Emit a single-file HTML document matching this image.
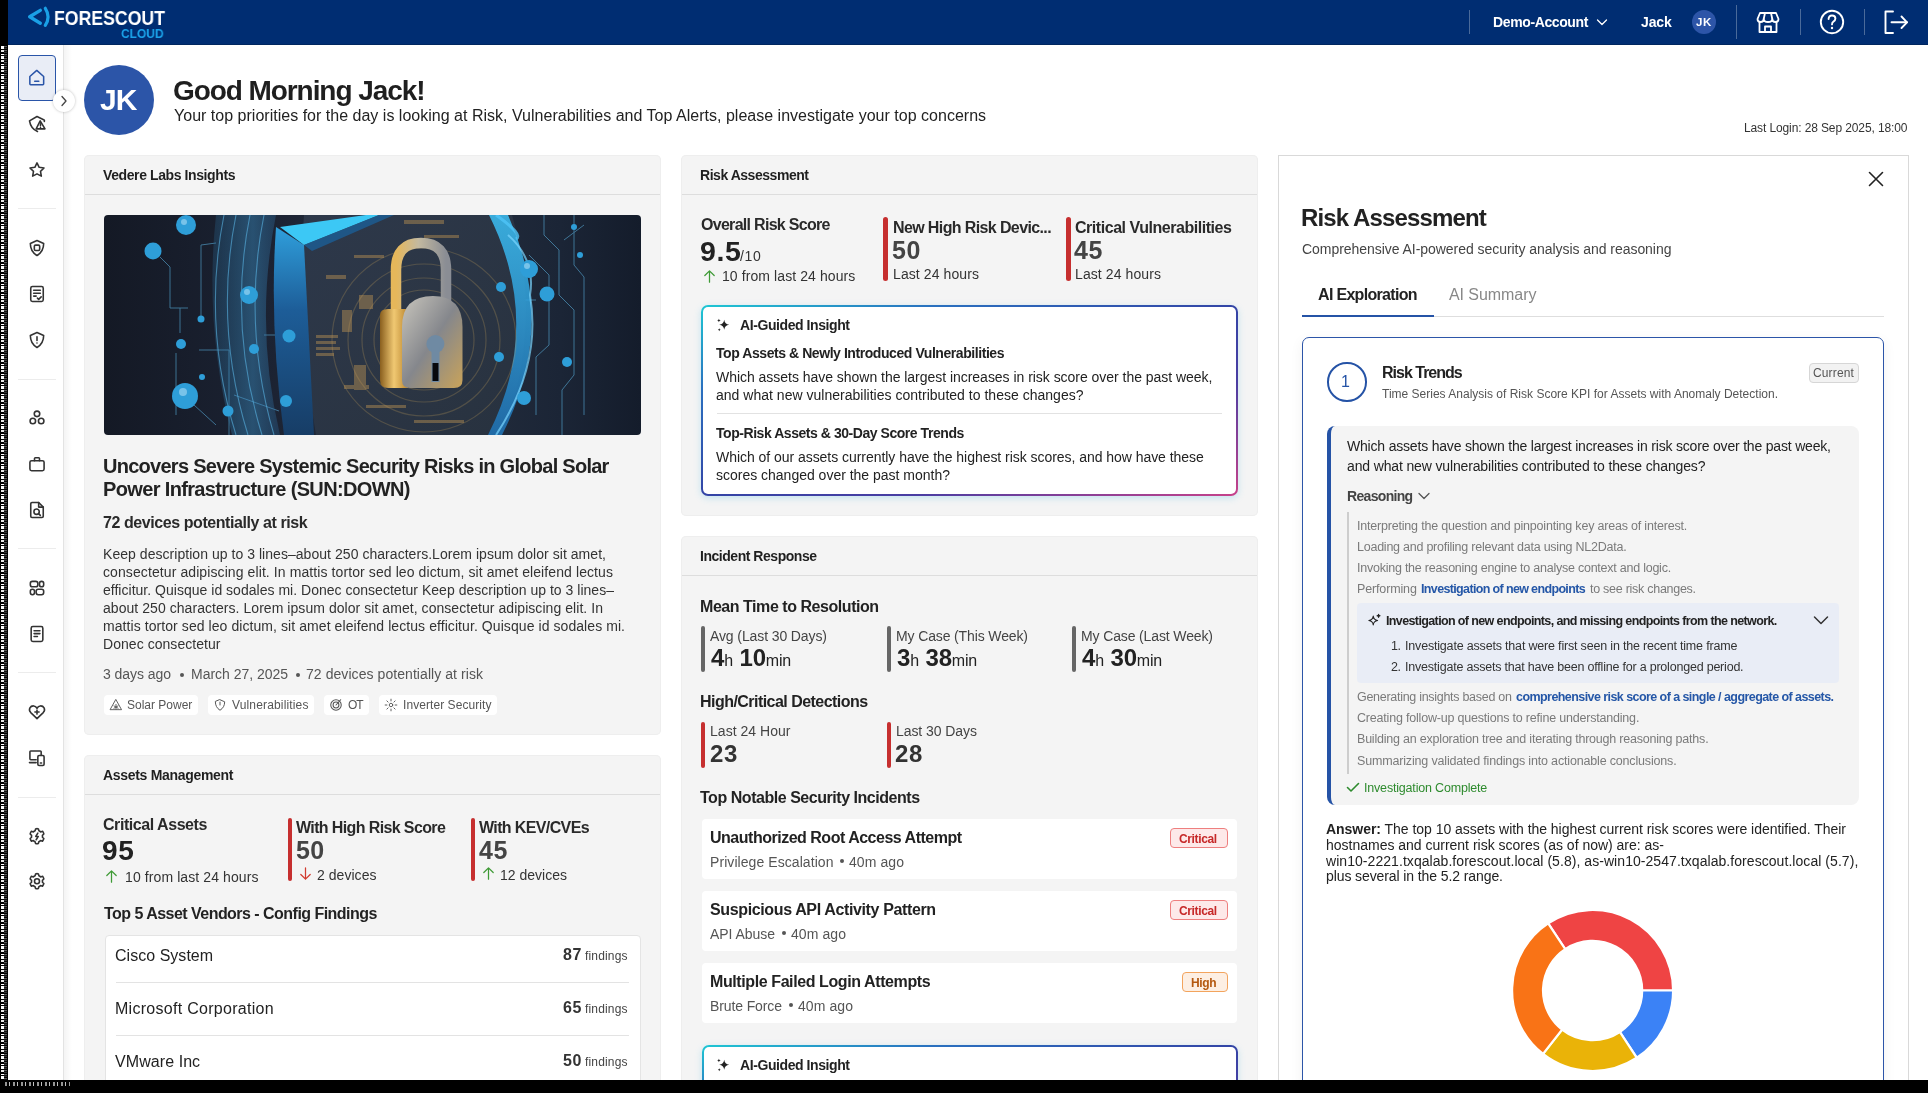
<!DOCTYPE html>
<html><head><meta charset="utf-8"><title>Forescout Cloud</title>
<style>
*{box-sizing:border-box;margin:0;padding:0}
html,body{width:1928px;height:1093px;overflow:hidden;background:#000}
body{position:relative;font-family:"Liberation Sans",sans-serif;color:#222;-webkit-font-smoothing:antialiased}
.a{position:absolute;white-space:nowrap;will-change:transform}
.b{position:absolute}
</style></head>
<body>
<div class="b" style="left:8px;top:0px;width:1920px;height:1080px;background:#fff"></div>
<div class="b" style="left:1px;top:46px;width:2.5px;height:1036px;background:repeating-linear-gradient(180deg,#fff 0,#fff 3px,#000 3px,#000 4px,#e8e8e8 4px,#e8e8e8 6px,#000 6px,#000 8px,#fff 8px,#fff 9px,#000 9px,#000 10px)"></div>
<div class="b" style="left:3.5px;top:46px;width:3.5px;height:1036px;background:repeating-linear-gradient(180deg,#555 0,#555 1px,#111 1px,#111 2px,#333 2px,#333 3px,#000 3px,#000 4px)"></div>
<div class="b" style="left:8px;top:0px;width:1920px;height:45px;background:#002d72;border-bottom:1px solid #00265f"></div>
<svg class="b" style="left:24px;top:4px;" width="30" height="26" viewBox="0 0 30 26"><path d="M16.3 6.4 L5.7 12.8 L16.3 19.2" fill="none" stroke="#1aa0e6" stroke-width="3.4" stroke-linecap="round" stroke-linejoin="round"/><path d="M21.3 4.3 Q26.8 12.8 21.3 21.3" fill="none" stroke="#1aa0e6" stroke-width="3.2" stroke-linecap="round"/></svg>
<div class="a" id="t1" style="left:53.53px;top:7.15px;font-size:21px;line-height:21px;color:#fff;font-weight:700;transform-origin:0 0;transform:scaleX(0.842)">FORESCOUT</div>
<div class="a" id="t2" style="left:120.57px;top:26.70px;font-size:13.3px;line-height:13.3px;color:#1ba3ea;font-weight:700;transform-origin:0 0;transform:scaleX(0.9)">CLOUD</div>
<div class="b" style="left:1469px;top:10px;width:1px;height:24px;background:#4a6a9a"></div>
<div class="a" id="t3" style="left:1493.42px;top:15.10px;font-size:14px;line-height:14px;color:#fff;font-weight:700;letter-spacing:-0.380px">Demo-Account</div>
<svg class="b" style="left:1596px;top:18px;" width="12" height="9" viewBox="0 0 12 9"><path d="M1.5 2 L6 6.5 L10.5 2" fill="none" stroke="#fff" stroke-width="1.3" stroke-linecap="round" stroke-linejoin="round"/></svg>
<div class="a" id="t4" style="left:1641.02px;top:15.10px;font-size:14px;line-height:14px;color:#fff;font-weight:700;letter-spacing:-0.159px">Jack</div>
<div class="b" style="left:1692px;top:10px;width:24px;height:24px;background:#2d55a8;border-radius:50%"></div>
<div class="a" id="t5" style="left:1695.89px;top:17.23px;font-size:11.5px;line-height:11.5px;color:#fff;font-weight:700;letter-spacing:0.502px">JK</div>
<div class="b" style="left:1736px;top:5px;width:1px;height:34px;background:#4a6a9a"></div>
<svg class="b" style="left:1756px;top:11px;" width="24" height="23" viewBox="0 0 24 23"><g fill="none" stroke="#fff" stroke-width="1.8" stroke-linecap="round" stroke-linejoin="round"><path d="M4 2 H20 L22.5 8 Q22.5 11 19.4 11 Q16.3 11 16.3 8 Q16.3 11 12 11 Q7.7 11 7.7 8 Q7.7 11 4.6 11 Q1.5 11 1.5 8 Z"/><path d="M7.7 8 L9 2 M16.3 8 L15 2"/><path d="M3.5 11 V21 H20.5 V11"/><path d="M9 21 V15.5 H15 V21"/></g></svg>
<div class="b" style="left:1800px;top:9px;width:1px;height:26px;background:#4a6a9a"></div>
<svg class="b" style="left:1819px;top:9px;" width="26" height="26" viewBox="0 0 26 26"><circle cx="13" cy="13" r="11.2" fill="none" stroke="#fff" stroke-width="1.9"/><path d="M9.6 10 Q9.6 6.5 13 6.5 Q16.4 6.5 16.4 9.6 Q16.4 11.6 14.4 12.6 Q13 13.3 13 15.4" fill="none" stroke="#fff" stroke-width="1.9" stroke-linecap="round"/><circle cx="13" cy="19" r="1.2" fill="#fff"/></svg>
<div class="b" style="left:1864px;top:9px;width:1px;height:26px;background:#4a6a9a"></div>
<svg class="b" style="left:1883px;top:10px;" width="26" height="25" viewBox="0 0 26 25"><g fill="none" stroke="#fff" stroke-width="1.9" stroke-linecap="round" stroke-linejoin="round"><path d="M10 1.5 H2.5 V23 H10"/><path d="M8.5 12.3 H24"/><path d="M18.5 6.5 L24 12.3 L18.5 18"/></g></svg>
<div class="b" style="left:8px;top:45px;width:56px;height:1035px;background:#fff;border-right:1px solid #e3e3e3"></div>
<div class="b" style="left:64px;top:45px;width:8px;height:1035px;background:linear-gradient(90deg,rgba(0,0,0,.045),rgba(0,0,0,0))"></div>
<div class="b" style="left:18px;top:55px;width:38px;height:46px;background:#e9edf6;border:1.2px solid #2a55a8;border-radius:4px"></div>
<svg class="b" style="left:27.2px;top:68.0px" width="19.5" height="19.5" viewBox="0 0 24 24" fill="none" stroke="#2a55a8" stroke-width="1.9" stroke-linecap="round" stroke-linejoin="round"><path d="M3.5 10.5 L12 3 L20.5 10.5 V19.5 Q20.5 20.5 19.5 20.5 H4.5 Q3.5 20.5 3.5 19.5 Z"/><path d="M9.5 16.3 H14.5"/></svg>
<div class="b" style="left:53px;top:90px;width:22px;height:22px;background:#fff;border-radius:50%;box-shadow:0 0 3px rgba(0,0,0,.25)"></div>
<svg class="b" style="left:60px;top:95px;" width="8" height="12" viewBox="0 0 8 12"><path d="M2 1.5 L6 6 L2 10.5" fill="none" stroke="#444" stroke-width="1.3" stroke-linecap="round" stroke-linejoin="round"/></svg>
<svg class="b" style="left:27.0px;top:114.0px" width="20" height="20" viewBox="0 0 24 24" fill="none" stroke="#333" stroke-width="1.9" stroke-linecap="round" stroke-linejoin="round"><path d="M12.6 21 Q4.5 17.5 3 8.2 L12 3 L20.6 7.2 Q21.3 8 20.8 9"/><path d="M15.8 8.2 L11 17.8 H21.6 Z"/><path d="M16.2 11.8 V14.2"/><path d="M16.2 16.1 V16.2"/></svg>
<svg class="b" style="left:27.0px;top:160.0px" width="20" height="20" viewBox="0 0 24 24" fill="none" stroke="#333" stroke-width="1.9" stroke-linecap="round" stroke-linejoin="round"><path d="M12 3.5 L14.6 8.8 L20.4 9.6 L16.2 13.6 L17.2 19.4 L12 16.7 L6.8 19.4 L7.8 13.6 L3.6 9.6 L9.4 8.8 Z"/></svg>
<div class="b" style="left:18px;top:208px;width:38px;height:1px;background:#ececec"></div>
<svg class="b" style="left:27.0px;top:238.0px" width="20" height="20" viewBox="0 0 24 24" fill="none" stroke="#333" stroke-width="1.9" stroke-linecap="round" stroke-linejoin="round"><path d="M12 3 L20 6.5 Q20 16 12 21 Q4 16 4 6.5 Z"/><rect x="8.8" y="8.5" width="6.4" height="6.4" rx="1.5"/></svg>
<svg class="b" style="left:27.0px;top:284.0px" width="20" height="20" viewBox="0 0 24 24" fill="none" stroke="#333" stroke-width="1.9" stroke-linecap="round" stroke-linejoin="round"><rect x="4.5" y="3" width="15" height="18" rx="2"/><path d="M8 7.5 H16 M8 11 H16 M8 14.5 H11"/><path d="M12.5 17 L14 18.5 L17 15.5"/></svg>
<svg class="b" style="left:27.0px;top:330.0px" width="20" height="20" viewBox="0 0 24 24" fill="none" stroke="#333" stroke-width="1.9" stroke-linecap="round" stroke-linejoin="round"><path d="M12 3 L20 6.5 Q20 16 12 21 Q4 16 4 6.5 Z"/><path d="M12 8 V12.5"/><path d="M12 15.5 V15.6"/></svg>
<div class="b" style="left:18px;top:379px;width:38px;height:1px;background:#ececec"></div>
<svg class="b" style="left:27.0px;top:408.0px" width="20" height="20" viewBox="0 0 24 24" fill="none" stroke="#333" stroke-width="1.9" stroke-linecap="round" stroke-linejoin="round"><circle cx="12" cy="7" r="3.3"/><circle cx="7" cy="15.5" r="3.3"/><circle cx="17" cy="15.5" r="3.3"/></svg>
<svg class="b" style="left:27.0px;top:454.0px" width="20" height="20" viewBox="0 0 24 24" fill="none" stroke="#333" stroke-width="1.9" stroke-linecap="round" stroke-linejoin="round"><rect x="3.5" y="8" width="17" height="12" rx="2"/><path d="M9 8 V5.5 Q9 4.5 10 4.5 H14 Q15 4.5 15 5.5 V8"/></svg>
<svg class="b" style="left:27.0px;top:500.0px" width="20" height="20" viewBox="0 0 24 24" fill="none" stroke="#333" stroke-width="1.9" stroke-linecap="round" stroke-linejoin="round"><path d="M14 3 H6 Q4.5 3 4.5 4.5 V19.5 Q4.5 21 6 21 H18 Q19.5 21 19.5 19.5 V8.5 Z"/><path d="M14 3 V8.5 H19.5"/><circle cx="11.5" cy="14" r="3.2"/><path d="M13.8 16.3 L16 18.5"/></svg>
<div class="b" style="left:18px;top:548px;width:38px;height:1px;background:#ececec"></div>
<svg class="b" style="left:27.0px;top:578.0px" width="20" height="20" viewBox="0 0 24 24" fill="none" stroke="#333" stroke-width="1.9" stroke-linecap="round" stroke-linejoin="round"><rect x="4" y="4" width="9" height="6.5" rx="2.5"/><rect x="15" y="4" width="5" height="6.5" rx="2.5"/><rect x="4" y="13.5" width="5" height="6.5" rx="2.5"/><rect x="11" y="13.5" width="9" height="6.5" rx="2.5"/></svg>
<svg class="b" style="left:27.0px;top:624.0px" width="20" height="20" viewBox="0 0 24 24" fill="none" stroke="#333" stroke-width="1.9" stroke-linecap="round" stroke-linejoin="round"><rect x="5" y="3" width="14" height="18" rx="2"/><path d="M8.5 8 H15.5 M8.5 11.5 H15.5 M8.5 15 H12.5"/></svg>
<div class="b" style="left:18px;top:672px;width:38px;height:1px;background:#ececec"></div>
<svg class="b" style="left:27.0px;top:702.0px" width="20" height="20" viewBox="0 0 24 24" fill="none" stroke="#333" stroke-width="1.9" stroke-linecap="round" stroke-linejoin="round"><path d="M12 20 L4.5 12.7 Q2 10 3.5 7 Q5 4.5 8 4.7 Q10.5 5 12 7.5 Q13.5 5 16 4.7 Q19 4.5 20.5 7 Q22 10 19.5 12.7 Z"/><path d="M12 9.5 V14.5 M9.5 12 H14.5"/></svg>
<svg class="b" style="left:27.0px;top:748.0px" width="20" height="20" viewBox="0 0 24 24" fill="none" stroke="#333" stroke-width="1.9" stroke-linecap="round" stroke-linejoin="round"><path d="M17 8 V4.5 Q17 3.5 16 3.5 H4.5 Q3.5 3.5 3.5 4.5 V13 Q3.5 14 4.5 14 H11"/><path d="M3 17.5 H11"/><rect x="13" y="9" width="7.5" height="12" rx="1.5"/><path d="M16 18 H17.5"/></svg>
<div class="b" style="left:18px;top:797px;width:38px;height:1px;background:#ececec"></div>
<svg class="b" style="left:27.0px;top:826.0px" width="20" height="20" viewBox="0 0 24 24" fill="none" stroke="#333" stroke-width="1.9" stroke-linecap="round" stroke-linejoin="round"><path d="M10.3 3.5 Q12 2.8 13.7 3.5 L14.3 5.8 Q15.5 6.3 16.4 7.1 L18.7 6.4 Q19.8 7.8 20.2 9.6 L18.5 11.2 Q18.7 12.5 18.5 13.5 L20.2 15 Q19.7 16.8 18.6 18.2 L16.3 17.5 Q15.4 18.3 14.2 18.8 L13.6 21 Q12 21.6 10.3 21 L9.7 18.8 Q8.5 18.3 7.6 17.5 L5.3 18.2 Q4.2 16.8 3.8 15 L5.5 13.5 Q5.3 12.3 5.5 11.2 L3.8 9.6 Q4.2 7.8 5.3 6.4 L7.6 7.1 Q8.5 6.3 9.7 5.8 Z"/><path d="M13 8.5 L10.5 12.5 H13.5 L11 16.5"/></svg>
<svg class="b" style="left:27.0px;top:871.0px" width="20" height="20" viewBox="0 0 24 24" fill="none" stroke="#333" stroke-width="1.9" stroke-linecap="round" stroke-linejoin="round"><path d="M10.3 3.5 Q12 2.8 13.7 3.5 L14.3 5.8 Q15.5 6.3 16.4 7.1 L18.7 6.4 Q19.8 7.8 20.2 9.6 L18.5 11.2 Q18.7 12.5 18.5 13.5 L20.2 15 Q19.7 16.8 18.6 18.2 L16.3 17.5 Q15.4 18.3 14.2 18.8 L13.6 21 Q12 21.6 10.3 21 L9.7 18.8 Q8.5 18.3 7.6 17.5 L5.3 18.2 Q4.2 16.8 3.8 15 L5.5 13.5 Q5.3 12.3 5.5 11.2 L3.8 9.6 Q4.2 7.8 5.3 6.4 L7.6 7.1 Q8.5 6.3 9.7 5.8 Z"/><circle cx="12" cy="12.2" r="3"/></svg>
<div class="b" style="left:84px;top:65px;width:70px;height:70px;background:#2c55a8;border-radius:50%"></div>
<div class="a" id="t6" style="left:99.90px;top:84.50px;font-size:30px;line-height:30px;color:#fff;font-weight:700;letter-spacing:-1.000px">JK</div>
<div class="a" id="t7" style="left:173.04px;top:77.20px;font-size:28px;line-height:28px;color:#1f1f1f;font-weight:700;letter-spacing:-1.072px">Good Morning Jack!</div>
<div class="a" id="t8" style="left:173.88px;top:108.10px;font-size:16px;line-height:16px;color:#222;letter-spacing:0.013px">Your top priorities for the day is looking at Risk, Vulnerabilities and Top Alerts, please investigate your top concerns</div>
<div class="a" id="t9" style="left:1744.16px;top:121.80px;font-size:12px;line-height:12px;color:#333;letter-spacing:-0.116px">Last Login: 28 Sep 2025, 18:00</div>
<div class="b" style="left:84px;top:155px;width:577px;height:580px;background:#f4f4f4;border-radius:5px;box-shadow:inset 0 0 0 1px #eeeeee"></div>
<div class="b" style="left:85px;top:194px;width:575px;height:1px;background:#dddddd"></div>
<div class="a" id="t10" style="left:103.02px;top:168.10px;font-size:14px;line-height:14px;color:#1f1f1f;font-weight:700;letter-spacing:-0.399px">Vedere Labs Insights</div>
<div class="b" style="left:681px;top:155px;width:577px;height:361px;background:#f4f4f4;border-radius:5px;box-shadow:inset 0 0 0 1px #eeeeee"></div>
<div class="b" style="left:682px;top:194px;width:575px;height:1px;background:#dddddd"></div>
<div class="a" id="t11" style="left:700.02px;top:168.10px;font-size:14px;line-height:14px;color:#1f1f1f;font-weight:700;letter-spacing:-0.461px">Risk Assessment</div>
<div class="b" style="left:681px;top:536px;width:577px;height:560px;background:#f4f4f4;border-radius:5px;box-shadow:inset 0 0 0 1px #eeeeee"></div>
<div class="b" style="left:682px;top:575px;width:575px;height:1px;background:#dddddd"></div>
<div class="a" id="t12" style="left:700.02px;top:549.10px;font-size:14px;line-height:14px;color:#1f1f1f;font-weight:700;letter-spacing:-0.468px">Incident Response</div>
<div class="b" style="left:84px;top:755px;width:577px;height:340px;background:#f4f4f4;border-radius:5px;box-shadow:inset 0 0 0 1px #eeeeee"></div>
<div class="b" style="left:85px;top:794px;width:575px;height:1px;background:#dddddd"></div>
<div class="a" id="t13" style="left:103.02px;top:768.10px;font-size:14px;line-height:14px;color:#1f1f1f;font-weight:700;letter-spacing:-0.307px">Assets Management</div>
<svg class="b" style="left:104px;top:215px;border-radius:4px" width="537" height="220" viewBox="0 0 537 220"><defs>
<linearGradient id="bgg" x1="0" y1="0" x2="1" y2="0"><stop offset="0" stop-color="#141925"/><stop offset="0.3" stop-color="#1b2232"/><stop offset="0.55" stop-color="#27303f"/><stop offset="0.85" stop-color="#1b2536"/><stop offset="1" stop-color="#141c2b"/></linearGradient>
<radialGradient id="glow" cx="0.5" cy="0.5" r="0.5"><stop offset="0" stop-color="#d8a24e" stop-opacity=".35"/><stop offset="0.55" stop-color="#8a6a3a" stop-opacity=".12"/><stop offset="1" stop-color="#8a6a3a" stop-opacity="0"/></radialGradient>
<linearGradient id="band" x1="0" y1="0" x2="0" y2="1"><stop offset="0" stop-color="#2f9fdc"/><stop offset="0.4" stop-color="#1d5d98"/><stop offset="1" stop-color="#173d66"/></linearGradient>
<linearGradient id="glass" x1="0" y1="0" x2="1" y2="0"><stop offset="0" stop-color="#2a6f9e" stop-opacity=".25"/><stop offset="0.6" stop-color="#3a8cc0" stop-opacity=".45"/><stop offset="1" stop-color="#2a6090" stop-opacity=".35"/></linearGradient>
<linearGradient id="face" x1="0" y1="0" x2="1" y2="1"><stop offset="0" stop-color="#2e394b"/><stop offset="1" stop-color="#28323f"/></linearGradient>
<linearGradient id="lockb" x1="0" y1="0" x2="1" y2="1"><stop offset="0" stop-color="#c9c6bd"/><stop offset="0.5" stop-color="#85878c"/><stop offset="1" stop-color="#c9a35a"/></linearGradient>
<linearGradient id="lside" x1="0" y1="0" x2="1" y2="0"><stop offset="0" stop-color="#8a5f1e"/><stop offset="0.5" stop-color="#f0c872"/><stop offset="1" stop-color="#b9852f"/></linearGradient>
<linearGradient id="shk" x1="0" y1="0" x2="1" y2="0"><stop offset="0" stop-color="#e6b75a"/><stop offset="0.45" stop-color="#c3b9a0"/><stop offset="1" stop-color="#8a8d94"/></linearGradient>
<linearGradient id="redge" x1="0" y1="0" x2="0" y2="1"><stop offset="0" stop-color="#3cc0f5"/><stop offset="1" stop-color="#1f74b8"/></linearGradient>
</defs>
<rect width="537" height="220" fill="url(#bgg)"/>
<g fill="none" stroke="#5fb8e8" stroke-width="1" opacity=".55">
<path d="M56 42 L66 52 V93 H84"/><path d="M76 93 V118"/><path d="M97 104 V30 L112 28"/><path d="M95 135 H125 V220"/><path d="M72 138 V200"/><path d="M160 120 H185"/><path d="M130 180 L175 196"/><path d="M90 190 L112 210"/>
<path d="M440 0 V20 L455 35 V80 L470 95 V160 L458 175 V220"/><path d="M425 40 L445 60 V130 L432 142 V200"/><path d="M470 0 V50 L480 62 V200"/><path d="M415 85 H432"/><path d="M460 25 L480 10"/>
</g>
<path d="M112 0 H172 Q150 110 176 220 H128 Q100 110 112 0 Z" fill="url(#glass)"/>
<g fill="none" stroke="#5ab4e4" stroke-width="1.1" opacity=".6">
<path d="M120 0 Q98 110 132 220"/><path d="M132 0 Q110 110 144 220"/><path d="M146 0 Q124 110 158 220"/><path d="M160 0 Q138 110 170 220"/>
</g>
<circle cx="310" cy="120" r="120" fill="url(#glow)"/>
<path d="M200 0 H408 Q440 110 398 220 H212 Q192 110 200 0 Z" fill="url(#face)" opacity=".95"/>
<path d="M172 12 L200 30 L210 220 H180 Q165 110 172 12 Z" fill="url(#band)"/>
<path d="M176 12 L262 0 H275 L200 30 Z" fill="#3cc8f5"/>
<path d="M200 30 L275 0 H290 L208 36 Z" fill="#1b5e96" opacity=".8"/>
<path d="M385 0 Q440 110 384 220 H398 Q454 110 404 0 Z" fill="url(#redge)" opacity=".85"/>
<path d="M404 20 Q432 45 426 80 Q438 150 392 220" fill="none" stroke="#7ad6ff" stroke-width="2" opacity=".7"/>
<path d="M392 0 Q420 20 412 24" fill="none" stroke="#4fc4f7" stroke-width="3" opacity=".8"/>
<g fill="none" stroke="#c9a35a" stroke-width="1.2" opacity=".25">
<circle cx="320" cy="125" r="50"/><circle cx="320" cy="125" r="62"/><circle cx="320" cy="125" r="76"/><circle cx="320" cy="125" r="92"/>
</g>
<g fill="#c79a55" opacity=".42">
<rect x="212" y="120" width="22" height="3"/><rect x="212" y="126" width="20" height="3"/><rect x="212" y="132" width="24" height="3"/><rect x="212" y="138" width="18" height="3"/><rect x="222" y="60" width="20" height="4"/><rect x="250" y="40" width="30" height="3"/><rect x="300" y="5" width="40" height="4"/><rect x="240" y="170" width="25" height="4"/><rect x="262" y="190" width="40" height="3"/><rect x="320" y="20" width="35" height="3"/><rect x="255" y="80" width="14" height="14"/><rect x="238" y="95" width="10" height="22"/><rect x="250" y="150" width="12" height="25"/><rect x="310" y="205" width="50" height="3"/>
</g>
<g fill="#2e9ed8">
<circle cx="82" cy="10" r="10"/><circle cx="49" cy="36" r="8.5"/><circle cx="81" cy="181" r="13"/><circle cx="145" cy="80" r="9"/><circle cx="77" cy="129" r="5"/><circle cx="185" cy="121" r="6.5"/><circle cx="124" cy="196" r="5.5"/><circle cx="182" cy="186" r="6"/><circle cx="150" cy="134" r="5"/><circle cx="97" cy="104" r="3.5"/><circle cx="98" cy="162" r="3"/>
<circle cx="425" cy="54" r="9"/><circle cx="443" cy="79" r="7.5"/><circle cx="397" cy="72" r="5"/><circle cx="463" cy="147" r="5"/><circle cx="420" cy="183" r="7"/><circle cx="395" cy="142" r="5"/><circle cx="470" cy="12" r="3"/><circle cx="476" cy="40" r="3"/>
</g>
<g fill="#d2f0ff" opacity=".45"><circle cx="80" cy="7" r="3"/><circle cx="143" cy="77" r="3"/><circle cx="79" cy="177" r="4"/><circle cx="423" cy="51" r="3"/></g>
<path d="M292 96 V55 Q292 28 317 28 Q342 28 342 55 V96" fill="none" stroke="url(#shk)" stroke-width="10.5"/>
<path d="M276 100 Q276 94 284 94 H304 V173 H284 Q276 173 276 165 Z" fill="url(#lside)"/>
<path d="M298 112 Q298 81 329 81 Q358.5 81 358.5 112 V165 Q358.5 173 350 173 H306 Q298 173 298 165 Z" fill="url(#lockb)"/>
<circle cx="331.4" cy="129" r="9" fill="#6f8aa3"/><path d="M327.5 132 H335.5 V167 H327.5 Z" fill="#6f8aa3"/><path d="M328.5 148 H334.5 V166 H328.5 Z" fill="#07090d"/>
</svg>
<div class="a" id="t14" style="left:102.90px;top:455.50px;font-size:20px;line-height:20px;color:#222;font-weight:700;letter-spacing:-0.730px">Uncovers Severe Systemic Security Risks in Global Solar</div>
<div class="a" id="t15" style="left:102.90px;top:478.50px;font-size:20px;line-height:20px;color:#222;font-weight:700;letter-spacing:-0.643px">Power Infrastructure (SUN:DOWN)</div>
<div class="a" id="t16" style="left:103.18px;top:515.20px;font-size:16px;line-height:16px;color:#2a2a2a;font-weight:700;letter-spacing:-0.427px">72 devices potentially at risk</div>
<div class="a" id="t17" style="left:103.32px;top:547.10px;font-size:14px;line-height:14px;color:#333;letter-spacing:0.043px">Keep description up to 3 lines–about 250 characters.Lorem ipsum dolor sit amet,</div>
<div class="a" id="t18" style="left:103.32px;top:565.10px;font-size:14px;line-height:14px;color:#333;letter-spacing:0.095px">consectetur adipiscing elit. In mattis tortor sed leo dictum, sit amet eleifend lectus</div>
<div class="a" id="t19" style="left:103.32px;top:583.10px;font-size:14px;line-height:14px;color:#333;letter-spacing:0.018px">efficitur. Quisque id sodales mi. Donec consectetur Keep description up to 3 lines–</div>
<div class="a" id="t20" style="left:103.32px;top:601.10px;font-size:14px;line-height:14px;color:#333;letter-spacing:0.053px">about 250 characters. Lorem ipsum dolor sit amet, consectetur adipiscing elit. In</div>
<div class="a" id="t21" style="left:103.32px;top:619.10px;font-size:14px;line-height:14px;color:#333;letter-spacing:0.073px">mattis tortor sed leo dictum, sit amet eleifend lectus efficitur. Quisque id sodales mi.</div>
<div class="a" id="t22" style="left:103.32px;top:637.10px;font-size:14px;line-height:14px;color:#333;letter-spacing:0.047px">Donec consectetur</div>
<div class="a" id="t23" style="left:103.32px;top:667.10px;font-size:14px;line-height:14px;color:#555;letter-spacing:-0.058px">3 days ago</div>
<div class="b" style="left:179.5px;top:673px;width:4px;height:4px;background:#555;border-radius:50%"></div>
<div class="a" id="t24" style="left:190.52px;top:667.10px;font-size:14px;line-height:14px;color:#555;letter-spacing:-0.024px">March 27, 2025</div>
<div class="b" style="left:295.5px;top:673px;width:4px;height:4px;background:#555;border-radius:50%"></div>
<div class="a" id="t25" style="left:306.42px;top:667.10px;font-size:14px;line-height:14px;color:#555;letter-spacing:0.065px">72 devices potentially at risk</div>
<div class="b" style="left:104px;top:695px;width:94px;height:20px;background:#fff;border-radius:4px"></div>
<div class="a" id="t26" style="left:127.26px;top:699.30px;font-size:12px;line-height:12px;color:#555;letter-spacing:-0.003px">Solar Power</div>
<div class="b" style="left:208px;top:695px;width:106px;height:20px;background:#fff;border-radius:4px"></div>
<div class="a" id="t27" style="left:231.56px;top:699.30px;font-size:12px;line-height:12px;color:#555;letter-spacing:0.155px">Vulnerabilities</div>
<div class="b" style="left:324px;top:695px;width:45px;height:20px;background:#fff;border-radius:4px"></div>
<div class="a" id="t28" style="left:347.56px;top:699.30px;font-size:12px;line-height:12px;color:#555;letter-spacing:-1.000px">OT</div>
<div class="b" style="left:379px;top:695px;width:118px;height:20px;background:#fff;border-radius:4px"></div>
<div class="a" id="t29" style="left:402.56px;top:699.30px;font-size:12px;line-height:12px;color:#555;letter-spacing:0.067px">Inverter Security</div>
<svg class="b" style="left:109.2px;top:698.0px" width="14" height="14" viewBox="0 0 24 24" fill="none" stroke="#555" stroke-width="1.6" stroke-linecap="round" stroke-linejoin="round"><path d="M12 3 L21.5 20 H2.5 Z"/><path d="M12 11 V19 M8.5 13.5 L15.5 17.5 M15.5 13.5 L8.5 17.5"/></svg>
<svg class="b" style="left:213.0px;top:698.0px" width="14" height="14" viewBox="0 0 24 24" fill="none" stroke="#555" stroke-width="1.7" stroke-linecap="round" stroke-linejoin="round"><path d="M12 3 L20 6.5 Q20 16 12 21 Q4 16 4 6.5 Z"/><path d="M12 7 V12"/></svg>
<svg class="b" style="left:328.5px;top:698.0px" width="14" height="14" viewBox="0 0 24 24" fill="none" stroke="#555" stroke-width="1.8" stroke-linecap="round" stroke-linejoin="round"><circle cx="12" cy="12" r="9"/><circle cx="12" cy="12" r="5"/><path d="M12 12 L20 3"/></svg>
<svg class="b" style="left:384.0px;top:698.0px" width="14" height="14" viewBox="0 0 24 24" fill="none" stroke="#555" stroke-width="1.6" stroke-linecap="round" stroke-linejoin="round"><circle cx="12" cy="12" r="3"/><path d="M12 2 V5 M12 19 V22 M2 12 H5 M19 12 H22 M5 5 L7 7 M17 17 L19 19 M19 5 L17 7 M5 19 L7 17"/></svg>
<div class="a" id="t30" style="left:700.58px;top:217.20px;font-size:16px;line-height:16px;color:#2a2a2a;font-weight:700;letter-spacing:-0.706px">Overall Risk Score</div>
<div class="a" id="t31" style="left:699.71px;top:236.78px;font-size:28.5px;line-height:28.5px;color:#222;font-weight:700;letter-spacing:0.600px">9.5</div>
<div class="a" id="t32" style="left:740.02px;top:249.10px;font-size:14px;line-height:14px;color:#333;letter-spacing:0.600px">/10</div>
<svg class="b" style="left:701.5px;top:268.5px" width="15" height="15" viewBox="0 0 24 24" fill="none" stroke="#3e9a35" stroke-width="2" stroke-linecap="round" stroke-linejoin="round"><path d="M12 21 V3 M4.5 10.5 L12 3 L19.5 10.5"/></svg>
<div class="a" id="t33" style="left:721.72px;top:269.10px;font-size:14px;line-height:14px;color:#333;letter-spacing:0.088px">10 from last 24 hours</div>
<div class="b" style="left:883px;top:217px;width:4.5px;height:64px;background:#c62f2f;border-radius:2.5px"></div>
<div class="a" id="t34" style="left:892.68px;top:219.70px;font-size:16px;line-height:16px;color:#2a2a2a;font-weight:700;letter-spacing:-0.619px">New High Risk Devic...</div>
<div class="a" id="t35" style="left:892.05px;top:238.25px;font-size:25px;line-height:25px;color:#444;font-weight:700;letter-spacing:0.600px">50</div>
<div class="a" id="t36" style="left:892.82px;top:266.60px;font-size:14px;line-height:14px;color:#333;letter-spacing:0.095px">Last 24 hours</div>
<div class="b" style="left:1066px;top:217px;width:4.5px;height:64px;background:#c62f2f;border-radius:2.5px"></div>
<div class="a" id="t37" style="left:1074.98px;top:219.70px;font-size:16px;line-height:16px;color:#2a2a2a;font-weight:700;letter-spacing:-0.459px">Critical Vulnerabilities</div>
<div class="a" id="t38" style="left:1074.35px;top:238.25px;font-size:25px;line-height:25px;color:#444;font-weight:700;letter-spacing:0.600px">45</div>
<div class="a" id="t39" style="left:1075.12px;top:266.60px;font-size:14px;line-height:14px;color:#333;letter-spacing:0.095px">Last 24 hours</div>
<div class="b" style="left:701px;top:304.5px;width:537px;height:191px;border-radius:7px;box-shadow:0 2px 7px rgba(70,185,230,.28);background:linear-gradient(to bottom right,#1ec8d4 0%,#2a70bf 22%,#3345a6 50%,#4a3da2 70%,#c8428a 100%)"></div>
<div class="b" style="left:703px;top:306.5px;width:533px;height:187px;border-radius:5px;background:#fff"></div>
<svg class="b" style="left:715.1px;top:316.7px" width="17" height="17" viewBox="0 0 24 24" fill="none" stroke="#333" stroke-width="1.9" stroke-linecap="round" stroke-linejoin="round"><path d="M13 4 Q13.8 10.2 20 11 Q13.8 11.8 13 18 Q12.2 11.8 6 11 Q12.2 10.2 13 4 Z" fill="#222" stroke="none"/><path d="M5.5 2.5 Q5.8 4.7 8 5 Q5.8 5.3 5.5 7.5 Q5.2 5.3 3 5 Q5.2 4.7 5.5 2.5 Z" fill="#222" stroke="none"/><path d="M6 16 Q6.2 17.8 8 18 Q6.2 18.2 6 20 Q5.8 18.2 4 18 Q5.8 17.8 6 16 Z" fill="#222" stroke="none"/></svg>
<div class="a" id="t40" style="left:739.52px;top:318.10px;font-size:14px;line-height:14px;color:#222;font-weight:700;letter-spacing:-0.417px">AI-Guided Insight</div>
<div class="a" id="t41" style="left:716.32px;top:346.00px;font-size:14px;line-height:14px;color:#222;font-weight:700;letter-spacing:-0.433px">Top Assets &amp; Newly Introduced Vulnerabilities</div>
<div class="a" id="t42" style="left:716.32px;top:370.10px;font-size:14px;line-height:14px;color:#222;letter-spacing:-0.030px">Which assets have shown the largest increases in risk score over the past week,</div>
<div class="a" id="t43" style="left:716.32px;top:388.10px;font-size:14px;line-height:14px;color:#222;letter-spacing:0.016px">and what new vulnerabilities contributed to these changes?</div>
<div class="b" style="left:717px;top:413px;width:505px;height:1px;background:#e2e2e2"></div>
<div class="a" id="t44" style="left:716.32px;top:425.50px;font-size:14px;line-height:14px;color:#222;font-weight:700;letter-spacing:-0.452px">Top-Risk Assets &amp; 30-Day Score Trends</div>
<div class="a" id="t45" style="left:716.32px;top:450.10px;font-size:14px;line-height:14px;color:#222;letter-spacing:-0.042px">Which of our assets currently have the highest risk scores, and how have these</div>
<div class="a" id="t46" style="left:716.32px;top:468.10px;font-size:14px;line-height:14px;color:#222;letter-spacing:-0.008px">scores changed over the past month?</div>
<div class="a" id="t47" style="left:700.18px;top:598.70px;font-size:16px;line-height:16px;color:#222;font-weight:700;letter-spacing:-0.452px">Mean Time to Resolution</div>
<div class="b" style="left:701.3px;top:626px;width:4px;height:46px;background:#666;border-radius:2px"></div>
<div class="a" id="t48" style="left:710.32px;top:628.60px;font-size:14px;line-height:14px;color:#444;letter-spacing:-0.107px">Avg (Last 30 Days)</div>
<div class="a" style="left:711.3px;top:645.6px;font-size:24px;line-height:24px;font-weight:700;color:#222;letter-spacing:-0.2px">4<span style="font-size:16px;font-weight:400;letter-spacing:0">h</span> 10<span style="font-size:16px;font-weight:400;letter-spacing:-0.2px">min</span></div>
<div class="b" style="left:886.8px;top:626px;width:4px;height:46px;background:#666;border-radius:2px"></div>
<div class="a" id="t49" style="left:895.82px;top:628.60px;font-size:14px;line-height:14px;color:#444;letter-spacing:-0.130px">My Case (This Week)</div>
<div class="a" style="left:896.8px;top:645.6px;font-size:24px;line-height:24px;font-weight:700;color:#222;letter-spacing:-0.2px">3<span style="font-size:16px;font-weight:400;letter-spacing:0">h</span> 38<span style="font-size:16px;font-weight:400;letter-spacing:-0.2px">min</span></div>
<div class="b" style="left:1072.3px;top:626px;width:4px;height:46px;background:#666;border-radius:2px"></div>
<div class="a" id="t50" style="left:1081.32px;top:628.60px;font-size:14px;line-height:14px;color:#444;letter-spacing:-0.131px">My Case (Last Week)</div>
<div class="a" style="left:1082.3px;top:645.6px;font-size:24px;line-height:24px;font-weight:700;color:#222;letter-spacing:-0.2px">4<span style="font-size:16px;font-weight:400;letter-spacing:0">h</span> 30<span style="font-size:16px;font-weight:400;letter-spacing:-0.2px">min</span></div>
<div class="a" id="t51" style="left:700.18px;top:694.20px;font-size:16px;line-height:16px;color:#222;font-weight:700;letter-spacing:-0.538px">High/Critical Detections</div>
<div class="b" style="left:701.3px;top:722px;width:4px;height:46px;background:#c62f2f;border-radius:2px"></div>
<div class="a" id="t52" style="left:710.32px;top:724.10px;font-size:14px;line-height:14px;color:#444;letter-spacing:0.028px">Last 24 Hour</div>
<div class="a" id="t53" style="left:709.62px;top:741.60px;font-size:24px;line-height:24px;color:#333;font-weight:700;letter-spacing:0.600px">23</div>
<div class="b" style="left:886.8px;top:722px;width:4px;height:46px;background:#c62f2f;border-radius:2px"></div>
<div class="a" id="t54" style="left:895.82px;top:724.10px;font-size:14px;line-height:14px;color:#444;letter-spacing:-0.067px">Last 30 Days</div>
<div class="a" id="t55" style="left:895.12px;top:741.60px;font-size:24px;line-height:24px;color:#333;font-weight:700;letter-spacing:0.600px">28</div>
<div class="a" id="t56" style="left:700.18px;top:790.40px;font-size:16px;line-height:16px;color:#222;font-weight:700;letter-spacing:-0.462px">Top Notable Security Incidents</div>
<div class="b" style="left:702px;top:819px;width:535px;height:60px;background:#fff;border-radius:4px"></div>
<div class="a" id="t57" style="left:710.18px;top:830.40px;font-size:16px;line-height:16px;color:#222;font-weight:700;letter-spacing:-0.489px">Unauthorized Root Access Attempt</div>
<div class="a" id="t58" style="left:710.32px;top:854.80px;font-size:14px;line-height:14px;color:#555;letter-spacing:0.069px">Privilege Escalation</div>
<div class="b" style="left:840.3px;top:859px;width:4px;height:4px;background:#555;border-radius:50%"></div>
<div class="a" id="t59" style="left:849.32px;top:854.80px;font-size:14px;line-height:14px;color:#555;letter-spacing:0.083px">40m ago</div>
<div class="b" style="left:1170px;top:828.3px;width:58px;height:20px;background:#fde9e9;border:1px solid #ee7f7f;border-radius:4px"></div>
<div class="a" id="t60" style="left:1179.36px;top:833.10px;font-size:12px;line-height:12px;color:#c62828;font-weight:700;letter-spacing:-0.364px">Critical</div>
<div class="b" style="left:702px;top:891px;width:535px;height:60px;background:#fff;border-radius:4px"></div>
<div class="a" id="t61" style="left:710.18px;top:902.40px;font-size:16px;line-height:16px;color:#222;font-weight:700;letter-spacing:-0.366px">Suspicious API Activity Pattern</div>
<div class="a" id="t62" style="left:710.32px;top:926.80px;font-size:14px;line-height:14px;color:#555;letter-spacing:-0.051px">API Abuse</div>
<div class="b" style="left:781.8px;top:931px;width:4px;height:4px;background:#555;border-radius:50%"></div>
<div class="a" id="t63" style="left:790.82px;top:926.80px;font-size:14px;line-height:14px;color:#555;letter-spacing:0.083px">40m ago</div>
<div class="b" style="left:1170px;top:900.3px;width:58px;height:20px;background:#fde9e9;border:1px solid #ee7f7f;border-radius:4px"></div>
<div class="a" id="t64" style="left:1179.36px;top:905.10px;font-size:12px;line-height:12px;color:#c62828;font-weight:700;letter-spacing:-0.364px">Critical</div>
<div class="b" style="left:702px;top:963px;width:535px;height:60px;background:#fff;border-radius:4px"></div>
<div class="a" id="t65" style="left:710.18px;top:974.40px;font-size:16px;line-height:16px;color:#222;font-weight:700;letter-spacing:-0.403px">Multiple Failed Login Attempts</div>
<div class="a" id="t66" style="left:710.32px;top:998.80px;font-size:14px;line-height:14px;color:#555;letter-spacing:-0.116px">Brute Force</div>
<div class="b" style="left:788.8px;top:1003px;width:4px;height:4px;background:#555;border-radius:50%"></div>
<div class="a" id="t67" style="left:797.82px;top:998.80px;font-size:14px;line-height:14px;color:#555;letter-spacing:0.083px">40m ago</div>
<div class="b" style="left:1182px;top:972.3px;width:46px;height:20px;background:#fdefe3;border:1px solid #f3a45d;border-radius:4px"></div>
<div class="a" id="t68" style="left:1191.26px;top:977.10px;font-size:12px;line-height:12px;color:#b4580f;font-weight:700;letter-spacing:-0.377px">High</div>
<div class="b" style="left:702px;top:1044.5px;width:536px;height:120px;border-radius:7px;box-shadow:0 2px 7px rgba(70,185,230,.28);background:linear-gradient(to bottom right,#1ec8d4 0%,#2a70bf 22%,#3345a6 50%,#4a3da2 70%,#c8428a 100%)"></div>
<div class="b" style="left:704px;top:1046.5px;width:532px;height:116px;border-radius:5px;background:#fff"></div>
<svg class="b" style="left:715.3px;top:1056.8px" width="17" height="17" viewBox="0 0 24 24" fill="none" stroke="#333" stroke-width="1.9" stroke-linecap="round" stroke-linejoin="round"><path d="M13 4 Q13.8 10.2 20 11 Q13.8 11.8 13 18 Q12.2 11.8 6 11 Q12.2 10.2 13 4 Z" fill="#222" stroke="none"/><path d="M5.5 2.5 Q5.8 4.7 8 5 Q5.8 5.3 5.5 7.5 Q5.2 5.3 3 5 Q5.2 4.7 5.5 2.5 Z" fill="#222" stroke="none"/><path d="M6 16 Q6.2 17.8 8 18 Q6.2 18.2 6 20 Q5.8 18.2 4 18 Q5.8 17.8 6 16 Z" fill="#222" stroke="none"/></svg>
<div class="a" id="t69" style="left:739.52px;top:1058.10px;font-size:14px;line-height:14px;color:#222;font-weight:700;letter-spacing:-0.417px">AI-Guided Insight</div>
<div class="a" id="t70" style="left:103.08px;top:817.20px;font-size:16px;line-height:16px;color:#2a2a2a;font-weight:700;letter-spacing:-0.447px">Critical Assets</div>
<div class="a" id="t71" style="left:102.24px;top:837.20px;font-size:28px;line-height:28px;color:#222;font-weight:700;letter-spacing:0.600px">95</div>
<svg class="b" style="left:104.0px;top:868.5px" width="15" height="15" viewBox="0 0 24 24" fill="none" stroke="#3e9a35" stroke-width="2" stroke-linecap="round" stroke-linejoin="round"><path d="M12 21 V3 M4.5 10.5 L12 3 L19.5 10.5"/></svg>
<div class="a" id="t72" style="left:124.52px;top:869.60px;font-size:14px;line-height:14px;color:#333;letter-spacing:0.098px">10 from last 24 hours</div>
<div class="b" style="left:287.5px;top:817.5px;width:4px;height:63px;background:#c62f2f;border-radius:2px"></div>
<div class="a" id="t73" style="left:296.48px;top:820.20px;font-size:16px;line-height:16px;color:#2a2a2a;font-weight:700;letter-spacing:-0.623px">With High Risk Score</div>
<div class="a" id="t74" style="left:295.85px;top:838.25px;font-size:25px;line-height:25px;color:#444;font-weight:700;letter-spacing:0.438px">50</div>
<svg class="b" style="left:297.5px;top:865.5px" width="15" height="15" viewBox="0 0 24 24" fill="none" stroke="#d13b2f" stroke-width="2" stroke-linecap="round" stroke-linejoin="round"><path d="M12 3 V21 M4.5 13.5 L12 21 L19.5 13.5"/></svg>
<div class="a" id="t75" style="left:316.72px;top:867.60px;font-size:14px;line-height:14px;color:#333;letter-spacing:0.040px">2 devices</div>
<div class="b" style="left:470.5px;top:817.5px;width:4px;height:63px;background:#c62f2f;border-radius:2px"></div>
<div class="a" id="t76" style="left:479.18px;top:820.20px;font-size:16px;line-height:16px;color:#2a2a2a;font-weight:700;letter-spacing:-0.623px">With KEV/CVEs</div>
<div class="a" id="t77" style="left:478.55px;top:838.25px;font-size:25px;line-height:25px;color:#444;font-weight:700;letter-spacing:0.600px">45</div>
<svg class="b" style="left:480.5px;top:865.5px" width="15" height="15" viewBox="0 0 24 24" fill="none" stroke="#3e9a35" stroke-width="2" stroke-linecap="round" stroke-linejoin="round"><path d="M12 21 V3 M4.5 10.5 L12 3 L19.5 10.5"/></svg>
<div class="a" id="t78" style="left:500.02px;top:867.60px;font-size:14px;line-height:14px;color:#333;letter-spacing:0.005px">12 devices</div>
<div class="a" id="t79" style="left:103.58px;top:906.20px;font-size:16px;line-height:16px;color:#222;font-weight:700;letter-spacing:-0.529px">Top 5 Asset Vendors - Config Findings</div>
<div class="b" style="left:104.5px;top:934.5px;width:536px;height:160px;background:#fff;border:1px solid #e4e4e4;border-radius:4px"></div>
<div class="a" id="t80" style="left:115.38px;top:948.40px;font-size:16px;line-height:16px;color:#222;letter-spacing:0.029px">Cisco System</div>
<div class="a" id="t81" style="left:563.18px;top:947.40px;font-size:16px;line-height:16px;color:#333;font-weight:700;letter-spacing:0.600px">87</div>
<div class="a" id="t82" style="left:585.46px;top:950.30px;font-size:12px;line-height:12px;color:#444;letter-spacing:0.166px">findings</div>
<div class="b" style="left:116px;top:982px;width:513px;height:1px;background:#e3e3e3"></div>
<div class="a" id="t83" style="left:115.38px;top:1001.40px;font-size:16px;line-height:16px;color:#222;letter-spacing:0.283px">Microsoft Corporation</div>
<div class="a" id="t84" style="left:563.18px;top:1000.40px;font-size:16px;line-height:16px;color:#333;font-weight:700;letter-spacing:0.600px">65</div>
<div class="a" id="t85" style="left:585.46px;top:1003.30px;font-size:12px;line-height:12px;color:#444;letter-spacing:0.166px">findings</div>
<div class="b" style="left:116px;top:1035px;width:513px;height:1px;background:#e3e3e3"></div>
<div class="a" id="t86" style="left:115.38px;top:1054.40px;font-size:16px;line-height:16px;color:#222;letter-spacing:0.072px">VMware Inc</div>
<div class="a" id="t87" style="left:563.18px;top:1053.40px;font-size:16px;line-height:16px;color:#333;font-weight:700;letter-spacing:0.600px">50</div>
<div class="a" id="t88" style="left:585.46px;top:1056.30px;font-size:12px;line-height:12px;color:#444;letter-spacing:0.166px">findings</div>
<div class="b" style="left:1278px;top:155px;width:631px;height:940px;background:#fff;border:1px solid #d9d9d9"></div>
<svg class="b" style="left:1868px;top:171px;" width="16" height="16" viewBox="0 0 16 16"><path d="M1.5 1.5 L14.5 14.5 M14.5 1.5 L1.5 14.5" fill="none" stroke="#222" stroke-width="1.6" stroke-linecap="round"/></svg>
<div class="a" id="t89" style="left:1301.12px;top:205.60px;font-size:24px;line-height:24px;color:#222;font-weight:700;letter-spacing:-0.872px">Risk Assessment</div>
<div class="a" id="t90" style="left:1301.82px;top:242.10px;font-size:14px;line-height:14px;color:#444;letter-spacing:-0.046px">Comprehensive AI-powered security analysis and reasoning</div>
<div class="a" id="t91" style="left:1317.68px;top:287.20px;font-size:16px;line-height:16px;color:#222;font-weight:700;letter-spacing:-0.679px">AI Exploration</div>
<div class="a" id="t92" style="left:1449.18px;top:287.20px;font-size:16px;line-height:16px;color:#888;letter-spacing:-0.066px">AI Summary</div>
<div class="b" style="left:1302px;top:316px;width:582px;height:1px;background:#dedede"></div>
<div class="b" style="left:1302px;top:315px;width:132px;height:2px;background:#2553a6"></div>
<div class="b" style="left:1302px;top:337px;width:582px;height:760px;background:#fff;border:1.3px solid #2c55a8;border-radius:7px;box-shadow:0 4px 14px rgba(0,0,0,.06)"></div>
<div class="b" style="left:1327.3px;top:362.2px;width:39.5px;height:39.5px;border:2px solid #2553a6;border-radius:50%"></div>
<div class="a" id="t93" style="left:1341.38px;top:374.40px;font-size:16px;line-height:16px;color:#2553a6;letter-spacing:0.214px">1</div>
<div class="a" id="t94" style="left:1382.38px;top:364.70px;font-size:16px;line-height:16px;color:#222;font-weight:700;letter-spacing:-0.998px">Risk Trends</div>
<div class="a" id="t95" style="left:1382.46px;top:388.30px;font-size:12px;line-height:12px;color:#555;letter-spacing:0.004px">Time Series Analysis of Risk Score KPI for Assets with Anomaly Detection.</div>
<div class="b" style="left:1809px;top:362.5px;width:50px;height:20px;background:#f2f2f2;border:1px solid #d6d6d6;border-radius:4px"></div>
<div class="a" id="t96" style="left:1813.46px;top:366.80px;font-size:12px;line-height:12px;color:#555;letter-spacing:0.137px">Current</div>
<div class="b" style="left:1327px;top:426px;width:532px;height:378.5px;background:#f4f4f4;border-radius:8px;border-left:4px solid #2553a6"></div>
<div class="a" id="t97" style="left:1346.52px;top:439.10px;font-size:14px;line-height:14px;color:#222;letter-spacing:-0.190px">Which assets have shown the largest increases in risk score over the past week,</div>
<div class="a" id="t98" style="left:1346.52px;top:458.90px;font-size:14px;line-height:14px;color:#222;letter-spacing:-0.142px">and what new vulnerabilities contributed to these changes?</div>
<div class="a" id="t99" style="left:1346.52px;top:489.30px;font-size:14px;line-height:14px;color:#444;font-weight:700;letter-spacing:-0.675px">Reasoning</div>
<svg class="b" style="left:1417px;top:491px;" width="14" height="10" viewBox="0 0 14 10"><path d="M2 2.5 L7 7.5 L12 2.5" fill="none" stroke="#555" stroke-width="1.3" stroke-linecap="round" stroke-linejoin="round"/></svg>
<div class="b" style="left:1347px;top:512px;width:2.2px;height:262px;background:#cdcdcd"></div>
<div class="a" id="t100" style="left:1356.53px;top:519.88px;font-size:12.5px;line-height:12.5px;color:#7a7a7a;letter-spacing:-0.196px">Interpreting the question and pinpointing key areas of interest.</div>
<div class="a" id="t101" style="left:1356.53px;top:540.88px;font-size:12.5px;line-height:12.5px;color:#7a7a7a;letter-spacing:-0.240px">Loading and profiling relevant data using NL2Data.</div>
<div class="a" id="t102" style="left:1356.53px;top:561.98px;font-size:12.5px;line-height:12.5px;color:#7a7a7a;letter-spacing:-0.239px">Invoking the reasoning engine to analyse context and logic.</div>
<div class="a" id="t103" style="left:1356.53px;top:582.88px;font-size:12.5px;line-height:12.5px;color:#7a7a7a;letter-spacing:-0.141px">Performing</div>
<div class="a" id="t104" style="left:1420.72px;top:582.88px;font-size:12.5px;line-height:12.5px;color:#2557a7;font-weight:700;letter-spacing:-0.644px">Investigation of new endpoints</div>
<div class="a" id="t105" style="left:1589.72px;top:582.88px;font-size:12.5px;line-height:12.5px;color:#7a7a7a;letter-spacing:-0.268px">to see risk changes.</div>
<div class="b" style="left:1357px;top:603px;width:481.5px;height:80px;background:#e9edf6;border-radius:4px"></div>
<svg class="b" style="left:1367.1px;top:612.7px" width="15" height="15" viewBox="0 0 24 24" fill="none" stroke="#222" stroke-width="1.7" stroke-linecap="round" stroke-linejoin="round"><path d="M10 5 Q10.8 11.2 17 12 Q10.8 12.8 10 19 Q9.2 12.8 3 12 Q9.2 11.2 10 5 Z"/><path d="M18.5 2 Q18.7 4.3 21 4.5 Q18.7 4.7 18.5 7 Q18.3 4.7 16 4.5 Q18.3 4.3 18.5 2 Z" fill="#222"/></svg>
<div class="a" id="t106" style="left:1386.42px;top:614.58px;font-size:12.5px;line-height:12.5px;color:#222;font-weight:700;letter-spacing:-0.622px">Investigation of new endpoints, and missing endpoints from the network.</div>
<svg class="b" style="left:1813px;top:615px;" width="16" height="11" viewBox="0 0 16 11"><path d="M1.5 2 L8 8.5 L14.5 2" fill="none" stroke="#333" stroke-width="1.5" stroke-linecap="round" stroke-linejoin="round"/></svg>
<div class="a" id="t107" style="left:1390.53px;top:640.38px;font-size:12.5px;line-height:12.5px;color:#333;letter-spacing:-0.562px">1.</div>
<div class="a" id="t108" style="left:1404.62px;top:640.38px;font-size:12.5px;line-height:12.5px;color:#333;letter-spacing:-0.183px">Investigate assets that were first seen in the recent time frame</div>
<div class="a" id="t109" style="left:1390.53px;top:660.88px;font-size:12.5px;line-height:12.5px;color:#333;letter-spacing:-0.562px">2.</div>
<div class="a" id="t110" style="left:1404.62px;top:660.88px;font-size:12.5px;line-height:12.5px;color:#333;letter-spacing:-0.211px">Investigate assets that have been offline for a prolonged period.</div>
<div class="a" id="t111" style="left:1356.53px;top:691.38px;font-size:12.5px;line-height:12.5px;color:#7a7a7a;letter-spacing:-0.287px">Generating insights based on</div>
<div class="a" id="t112" style="left:1516.12px;top:691.38px;font-size:12.5px;line-height:12.5px;color:#2557a7;font-weight:700;letter-spacing:-0.565px">comprehensive risk score of a single / aggregate of assets.</div>
<div class="a" id="t113" style="left:1356.53px;top:712.38px;font-size:12.5px;line-height:12.5px;color:#7a7a7a;letter-spacing:-0.196px">Creating follow-up questions to refine understanding.</div>
<div class="a" id="t114" style="left:1356.53px;top:733.38px;font-size:12.5px;line-height:12.5px;color:#7a7a7a;letter-spacing:-0.211px">Building an exploration tree and iterating through reasoning paths.</div>
<div class="a" id="t115" style="left:1356.53px;top:754.58px;font-size:12.5px;line-height:12.5px;color:#7a7a7a;letter-spacing:-0.167px">Summarizing validated findings into actionable conclusions.</div>
<svg class="b" style="left:1346px;top:782px;" width="14" height="11" viewBox="0 0 14 11"><path d="M1.5 5.5 L5 9 L12.5 1.5" fill="none" stroke="#2e8b2e" stroke-width="1.6" stroke-linecap="round" stroke-linejoin="round"/></svg>
<div class="a" id="t116" style="left:1364.42px;top:781.58px;font-size:12.5px;line-height:12.5px;color:#2e8b2e;letter-spacing:-0.185px">Investigation Complete</div>
<div class="a" id="t117" style="left:1326.42px;top:822.10px;font-size:14px;line-height:14px;color:#222;letter-spacing:-0.038px"><b style="font-weight:700">Answer:</b> The top 10 assets with the highest current risk scores were identified. Their</div>
<div class="a" id="t118" style="left:1326.42px;top:837.90px;font-size:14px;line-height:14px;color:#222;letter-spacing:-0.009px">hostnames and current risk scores (as of now) are: as-</div>
<div class="a" id="t119" style="left:1326.42px;top:853.60px;font-size:14px;line-height:14px;color:#222;letter-spacing:0.055px">win10-2221.txqalab.forescout.local (5.8), as-win10-2547.txqalab.forescout.local (5.7),</div>
<div class="a" id="t120" style="left:1326.42px;top:869.40px;font-size:14px;line-height:14px;color:#222;letter-spacing:-0.097px">plus several in the 5.2 range.</div>
<svg class="b" style="left:1400px;top:890px;" width="400" height="200" viewBox="0 0 400 200"><path d="M148.17 33.37 A80.50 80.50 0 0 1 273.10 100.50 L242.20 100.50 A49.60 49.60 0 0 0 165.22 59.14 Z" fill="#ef4444" stroke="#fff" stroke-width="2.2" stroke-linejoin="miter"/><path d="M273.10 100.50 A80.50 80.50 0 0 1 236.80 167.78 L219.83 141.96 A49.60 49.60 0 0 0 242.20 100.50 Z" fill="#3b82f6" stroke="#fff" stroke-width="2.2" stroke-linejoin="miter"/><path d="M236.80 167.78 A80.50 80.50 0 0 1 143.04 163.93 L162.06 139.59 A49.60 49.60 0 0 0 219.83 141.96 Z" fill="#eab308" stroke="#fff" stroke-width="2.2" stroke-linejoin="miter"/><path d="M143.04 163.93 A80.50 80.50 0 0 1 148.17 33.37 L165.22 59.14 A49.60 49.60 0 0 0 162.06 139.59 Z" fill="#f97316" stroke="#fff" stroke-width="2.2" stroke-linejoin="miter"/></svg>
<div class="b" style="left:0px;top:1080px;width:1928px;height:13px;background:#000"></div>
<div class="b" style="left:2px;top:1082px;width:68px;height:4px;background:repeating-linear-gradient(90deg,#000 0,#000 3px,#bbb 3px,#bbb 5px,#000 5px,#000 7px,#eee 7px,#eee 8px);opacity:.8"></div>
</body></html>
